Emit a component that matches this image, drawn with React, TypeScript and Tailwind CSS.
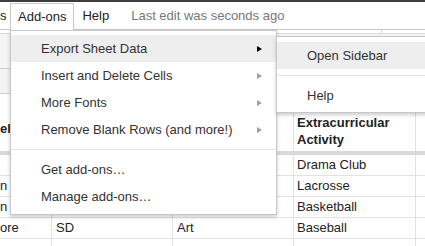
import React from "react";

const mainItems = [
  { label: "Export Sheet Data", sub: true, active: true },
  { label: "Insert and Delete Cells", sub: true },
  { label: "More Fonts", sub: true },
  { label: "Remove Blank Rows (and more!)", sub: true },
];

const lowerItems = ["Get add-ons…", "Manage add-ons…"];

// rows below the frozen line: [col0 visible tail, col1, col2, col3]
const rows = [
  ["", "", "", "Drama Club"],
  ["n", "", "", "Lacrosse"],
  ["n", "", "", "Basketball"],
  ["ore", "SD", "Art", "Baseball"],
  ["", "", "", ""],
];

function Arrow({ dark }: { dark?: boolean }) {
  return (
    <span
      className={
        "w-0 h-0 border-y-[3px] border-y-transparent border-l-[5px] " +
        (dark ? "border-l-black" : "border-l-[#a0a0a0]")
      }
    />
  );
}

function MenuItem({ label, sub, active }: { label: string; sub?: boolean; active?: boolean }) {
  return (
    <div
      className={
        "h-[27px] flex items-center justify-between pl-[30px] pr-[14px] " +
        (active ? "bg-[#eeeeee]" : "")
      }
    >
      <span>{label}</span>
      {sub && <Arrow dark={active} />}
    </div>
  );
}

function Row({ cells }: { cells: string[] }) {
  return (
    <div className="flex h-[21px] border-b border-[#e2e2e2] items-center text-[#222]">
      <div className="w-[52px] h-full border-r border-[#e2e2e2] flex items-center">{cells[0]}</div>
      <div className="w-[121px] h-full border-r border-[#e2e2e2] flex items-center pl-[4px]">{cells[1]}</div>
      <div className="w-[121px] h-full border-r border-[#e2e2e2] flex items-center pl-[4px]">{cells[2]}</div>
      <div className="w-[122px] h-full border-r border-[#e2e2e2] flex items-center pl-[3px]">{cells[3]}</div>
      <div className="flex-1 h-full" />
    </div>
  );
}

export default function App() {
  return (
    <div className="relative w-[425px] h-[246px] overflow-hidden bg-white text-[13px] text-black font-['Liberation_Sans',Arial,sans-serif]">
      {/* window top edge */}
      <div className="h-[2px] bg-[#3c3c3c]" />

      {/* menu bar */}
      <div className="h-[28px] flex items-end border-b border-[#c8c8c8]">
        <div className="h-[26px] w-[10px] flex items-center text-[#222]">s</div>
        <div className="relative z-20 h-[27px] -mb-[1px] px-[7px] flex items-center bg-white border border-b-0 border-[#c8c8c8] text-[#222]">
          Add-ons
        </div>
        <div className="h-[26px] flex items-center pl-[8px] text-[#222]">Help</div>
        <div className="h-[26px] flex items-center pl-[22px] text-[#777]">Last edit was seconds ago</div>
      </div>

      {/* thin strip under menu bar */}
      <div className="h-[4px] flex border-b border-[#dadada]">
        <div className="w-[382px] border-r border-[#dadada]" />
      </div>

      {/* toolbar */}
      <div className="h-[35px] bg-[#f5f5f5] border-b border-[#d0d0d0]" />

      {/* column headers */}
      <div className="h-[25px] bg-[#f3f3f3] border-b border-[#d0d0d0]" />

      {/* header row */}
      <div className="flex h-[57px] font-bold text-[#222]">
        <div className="w-[52px] h-full border-r border-[#e2e2e2] flex items-end pb-[13px]">el</div>
        <div className="w-[121px] h-full border-r border-[#e2e2e2]" />
        <div className="w-[121px] h-full border-r border-[#e2e2e2]" />
        <div className="w-[122px] h-full border-r border-[#e2e2e2] flex items-end pb-[3px] pl-[3px] leading-[17px]">
          Extracurricular
          <br />
          Activity
        </div>
        <div className="flex-1" />
      </div>

      {/* frozen row divider */}
      <div className="h-[4px] bg-[#dadada]" />

      {rows.map((r, i) => (
        <Row key={i} cells={r} />
      ))}

      {/* Add-ons dropdown */}
      <div className="absolute left-[10px] top-[30px] w-[267px] h-[185px] z-10 bg-white border border-[#c8c8c8] shadow-[0_2px_4px_rgba(0,0,0,0.2)] pt-[4px] text-[#333]">
        {mainItems.map((it) => (
          <MenuItem key={it.label} {...it} />
        ))}
        <div className="my-[6px] h-px bg-[#e5e5e5]" />
        {lowerItems.map((l) => (
          <MenuItem key={l} label={l} />
        ))}
      </div>

      {/* submenu */}
      <div className="absolute left-[276px] top-[36px] w-[160px] h-[77px] z-10 bg-white border border-[#c8c8c8] shadow-[0_2px_4px_rgba(0,0,0,0.2)] pt-[5px] text-[#333]">
        <MenuItem label="Open Sidebar" active />
        <div className="my-[6px] h-px bg-[#e5e5e5]" />
        <MenuItem label="Help" />
      </div>
    </div>
  );
}
